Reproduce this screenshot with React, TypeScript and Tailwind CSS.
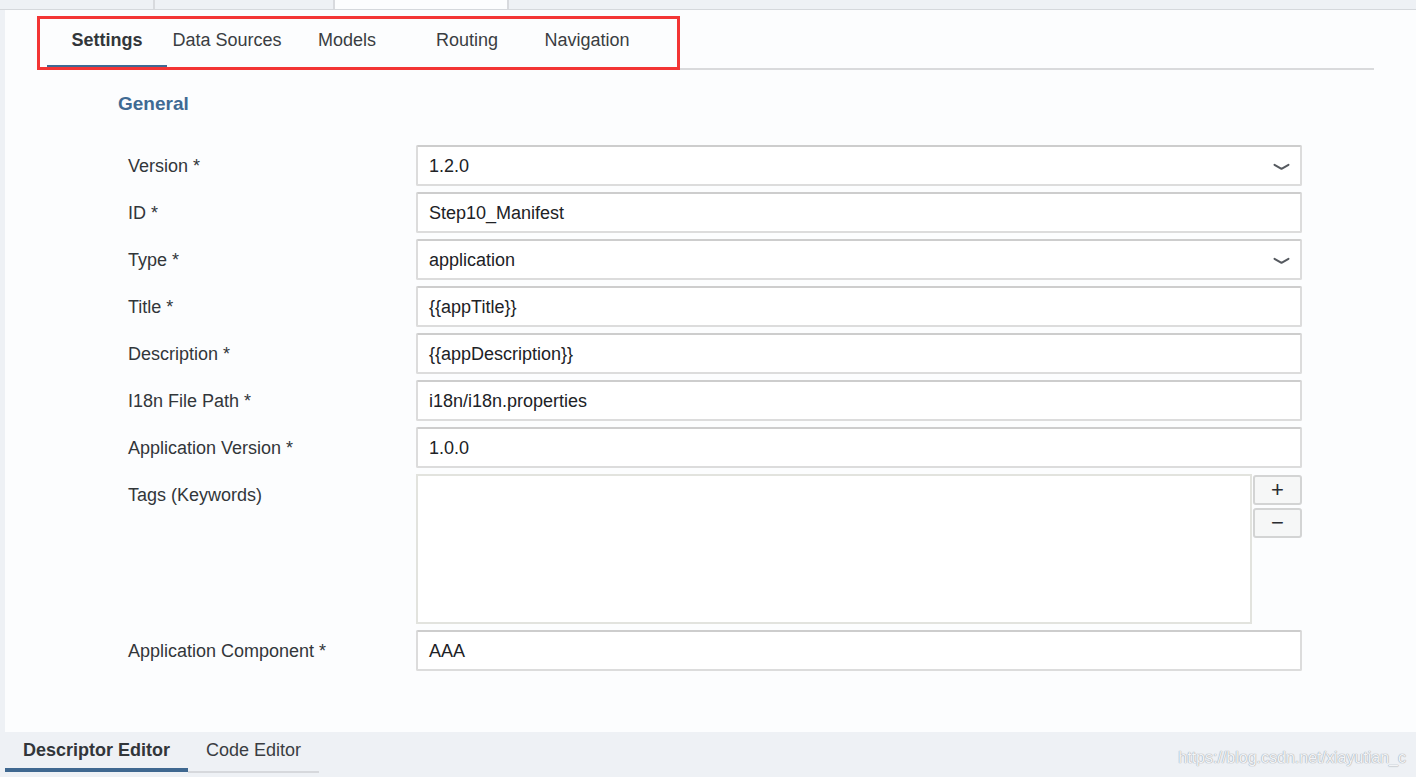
import React from "react";

const fields = [
  { label: "Version *", value: "1.2.0", select: true },
  { label: "ID *", value: "Step10_Manifest" },
  { label: "Type *", value: "application", select: true },
  { label: "Title *", value: "{{appTitle}}" },
  { label: "Description *", value: "{{appDescription}}" },
  { label: "I18n File Path *", value: "i18n/i18n.properties" },
  { label: "Application Version *", value: "1.0.0" },
];

const tabs = ["Settings", "Data Sources", "Models", "Routing", "Navigation"];

function Chevron() {
  return (
    <svg width="17" height="8" viewBox="0 0 17 8" fill="none">
      <path d="M1.5 1.8 L8.5 5.8 L15.5 1.8" stroke="#55595f" strokeWidth="2" strokeLinecap="round" strokeLinejoin="round" />
    </svg>
  );
}

function Field({ value, select }: { value: string; select?: boolean }) {
  return (
    <div className="flex h-[41px] w-[886px] items-center rounded-[2px] border-2 border-[#dcdcdc] border-t-[#cdcdcd] bg-white">
      <span className="flex-1 px-[11px] pt-[2px] text-[18px] text-[#202226]">{value}</span>
      {select && (
        <span className="flex h-full w-[38px] items-center justify-center pt-[3px]">
          <Chevron />
        </span>
      )}
    </div>
  );
}

export default function App() {
  return (
    <div className="relative flex h-[777px] w-full flex-col overflow-hidden bg-[#fcfdfe] font-['Liberation_Sans',Arial,sans-serif]">
      {/* top document tabs strip */}
      <div className="flex h-[10px] border-b border-[#d5d8dc] bg-[#eef1f5]">
        <div className="w-[155px] border-r-2 border-[#d8dade]" />
        <div className="w-[180px] border-r-2 border-[#d8dade]" />
        <div className="w-[174px] border-r-2 border-[#d8dade] bg-[#fcfdfe]" />
        <div className="flex-1" />
      </div>

      <div className="flex flex-1">
        <div className="w-[5px] bg-[#eef1f5]" />
        <div className="flex-1">
          {/* section tabs */}
          <div className="mx-[42px] mt-[6px] flex border-b-2 border-[#d9dadc]">
            {tabs.map((t, i) => (
              <div
                key={t}
                className={
                  "flex h-[52px] w-[120px] justify-center pt-[12px] text-[18px] leading-[24px] " +
                  (i === 0
                    ? "border-b-[3px] border-[#3f6a93] font-bold text-[#32363a]"
                    : "text-[#3a3d42]")
                }
              >
                {t}
              </div>
            ))}
          </div>

          <div className="pl-[113px] pt-[22px] text-[19px] font-bold leading-[24px] text-[#3f6a93]">General</div>

          <div className="mt-[29px] flex flex-col gap-[6px] pl-[123px]">
            {fields.map((f) => (
              <div key={f.label} className="flex">
                <div className="flex h-[41px] w-[288px] items-center pt-[1px] text-[18px] text-[#32363a]">{f.label}</div>
                <Field value={f.value} select={f.select} />
              </div>
            ))}

            <div className="flex">
              <div className="flex h-[41px] w-[288px] items-center pt-[2px] text-[18px] text-[#32363a]">Tags (Keywords)</div>
              <div className="h-[150px] w-[836px] border-2 border-[#e2e3de] bg-white" />
              <div className="ml-[1px] flex flex-col gap-[3px] pt-[1px]">
                <button className="flex h-[30px] w-[49px] items-center justify-center rounded-[3px] border-2 border-[#d3d4d4] bg-[#f6f7f7] text-[22px] leading-none text-[#2a2c30]">
                  +
                </button>
                <button className="flex h-[30px] w-[49px] items-center justify-center rounded-[3px] border-2 border-[#d3d4d4] bg-[#f6f7f7] text-[22px] leading-none text-[#2a2c30]">
                  −
                </button>
              </div>
            </div>

            <div className="flex">
              <div className="flex h-[41px] w-[288px] items-center pt-[1px] text-[18px] text-[#32363a]">Application Component *</div>
              <Field value="AAA" />
            </div>
          </div>
        </div>
      </div>

      {/* bottom editor tabs */}
      <div className="flex h-[45px] bg-[#eef1f5] pl-[5px]">
        <div className="flex h-[40px] flex-col justify-center border-b-4 border-[#3f6890] px-[18px] text-[18px] font-bold text-[#32363a]">
          Descriptor Editor
        </div>
        <div className="flex h-[41px] flex-col justify-center border-b-2 border-[#d6d8dc] px-[18px] pb-[2px] text-[18px] text-[#3a3d42]">
          Code Editor
        </div>
        <div className="ml-auto pr-[10px] pt-[14px] text-[16px] text-[#f2f4f7] [text-shadow:0_0_1px_#9ca1a9,0_0_1px_#9ca1a9]">
          https://blog.csdn.net/xiayutian_c
        </div>
      </div>

      {/* red annotation box */}
      <div className="pointer-events-none absolute left-[37px] top-[16px] h-[54px] w-[643px] border-[3px] border-[#f33535]" />
    </div>
  );
}
